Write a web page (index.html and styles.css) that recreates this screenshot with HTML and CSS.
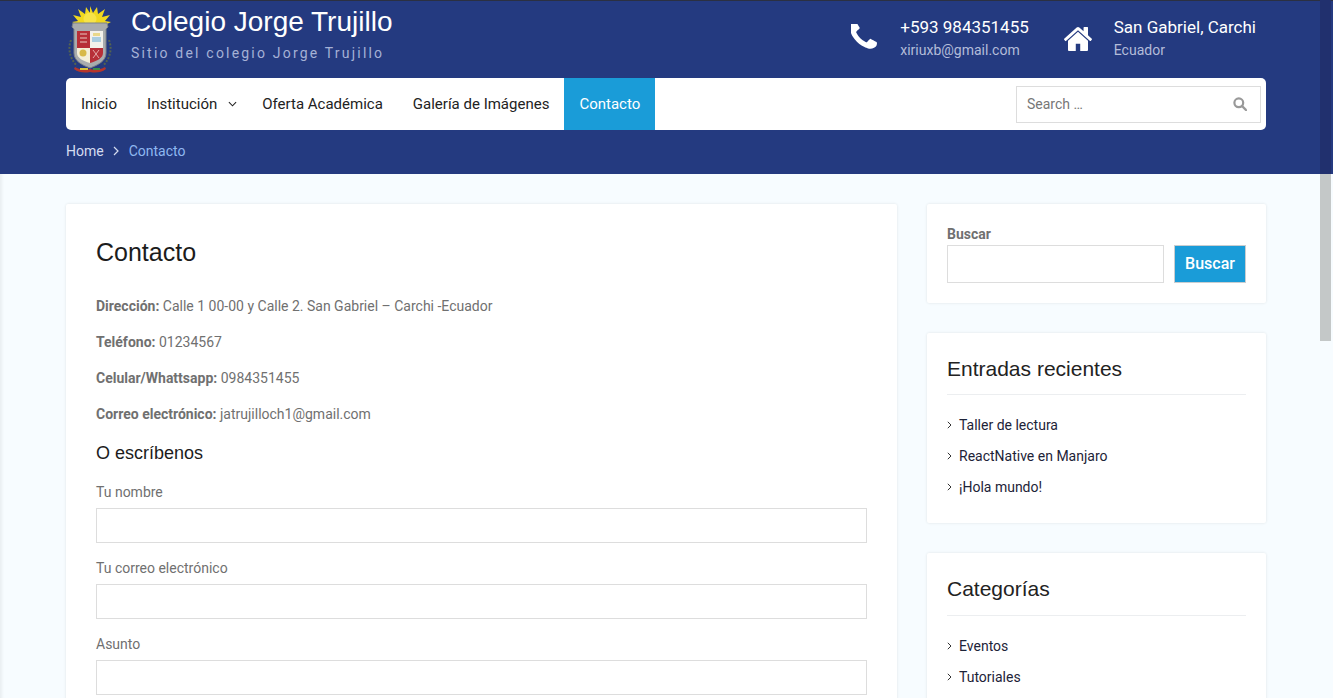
FILE: index.html
```html
<!DOCTYPE html>
<html lang="es">
<head>
<meta charset="utf-8">
<title>Contacto – Colegio Jorge Trujillo</title>
<link rel="stylesheet" href="styles.css">
</head>
<body>
<header class="site-header">
  <div class="top-row">
    <div class="brand">
      <svg class="crest" viewBox="0 0 50 70" width="50" height="70" aria-hidden="true">
        <g fill="#f0d81e">
          <path d="M24 2l3 7 4-6 1 7 7-5-3 8 8-2-5 6 6 1-6 3H12l-6-3 6-1-5-6 8 2-3-8 7 5 1-7 4 6z"/>
        </g>
        <circle cx="24" cy="15" r="6.5" fill="#f7e447"/>
        <g fill="none" stroke="#55644f" stroke-width="2" stroke-dasharray="2 1.5">
          <path d="M5 36c-3 8-2 17 6 26"/>
          <path d="M43 36c3 8 2 17-6 26"/>
        </g>
        <path d="M7 19h34l1 4-2 2v24c0 8-8 12-16 15-8-3-16-7-16-15V25l-2-2z" fill="#a9acae" stroke="#7f8488" stroke-width="1"/>
        <path d="M11 27h13v17H11z" fill="#b72f38"/>
        <path d="M24 27h13v17H24z" fill="#f3f1ea"/>
        <path d="M26 33h9v5h-9z" fill="#a9cde0"/>
        <path d="M27 29h7v3h-7z" fill="#e9d88a"/>
        <path d="M11 44h13v15c-7-2-13-5-13-10z" fill="#f4efd8"/>
        <path d="M24 44h13v5c0 5-6 8-13 10z" fill="#b72f38"/>
        <circle cx="17" cy="49" r="3.5" fill="#d7b948"/>
        <path d="M14 30h7M14 34h7M14 38h7" stroke="#e8c9c0" stroke-width="1"/>
        <path d="M27 46l6 8M33 46l-6 8" stroke="#e5a9a9" stroke-width="1"/>
        <path d="M9 63c5 3 10 3 15 2 5 1 10 1 15-2l1 2c-5 4-11 4-16 3-5 1-11 1-16-3z" fill="#b5352c"/>
        <path d="M14 64h8v2h-8z" fill="#d9c43a"/>
        <path d="M27 64h7v2h-7z" fill="#3f8a45"/>
      </svg>
      <div class="brand-text">
        <div class="site-title">Colegio Jorge Trujillo</div>
        <div class="site-tagline">Sitio del colegio Jorge Trujillo</div>
      </div>
    </div>
    <div class="contact-group">
      <div class="contact-item phone-item">
        <svg class="icon-phone" viewBox="256 256 1344 1344" width="26" height="26" aria-hidden="true"><path fill="#fff" d="M1600 1240q0 27-10 70.5t-21 68.5q-21 50-122 106-94 51-186 51-27 0-53-3.5t-57.5-12.5-47-14.5-55.5-20.5-49-18q-98-35-175-83-127-79-264-216t-216-264q-48-77-83-175-3-9-18-49t-20.5-55.5-14.5-47-12.5-57.5-3.5-53q0-92 51-186 56-101 106-122 25-11 68.5-21t70.5-10q14 0 21 3 18 6 53 76 11 19 30 54t35 63.5 31 53.5q3 4 17.5 25t21.5 35.5 7 28.5q0 20-28.5 50t-62 55-62 53-28.5 46q0 9 5 22.5t8.5 20.5 14 24 11.5 19q76 137 174 235t235 174q2 1 19 11.5t24 14 20.5 8.5 22.5 5q18 0 46-28.5t53-62 55-62 50-28.5q14 0 28.5 7t35.5 21.5 25 17.5q25 15 53.5 31t63.5 35 54 30q70 35 76 53 3 7 3 21z"/></svg>
        <div>
          <div class="contact-main">+593 984351455</div>
          <div class="contact-sub">xiriuxb@gmail.com</div>
        </div>
      </div>
      <div class="contact-item home-item">
        <svg class="icon-home" viewBox="90 253 1612 1283" preserveAspectRatio="none" width="28" height="24" aria-hidden="true"><path fill="#fff" d="M1472 992v480q0 26-19 45t-45 19h-384v-384h-256v384h-384q-26 0-45-19t-19-45v-480q0-1 .5-3t.5-3l575-474 575 474q1 2 1 6zm223-69l-62 74q-8 9-21 11h-3q-13 0-21-7l-692-577-692 577q-12 8-24 7-13-2-21-11l-62-74q-8-10-7-23.5t11-21.5l719-599q32-26 76-26t76 26l244 204v-195q0-14 9-23t23-9h192q14 0 23 9t9 23v408l219 182q10 8 11 21.5t-7 23.5z"/></svg>
        <div>
          <div class="contact-main">San Gabriel, Carchi</div>
          <div class="contact-sub">Ecuador</div>
        </div>
      </div>
    </div>
  </div>
  <nav class="nav-bar">
    <ul class="nav-list">
      <li class="nav-link">Inicio</li>
      <li class="nav-link has-sub">Institución
        <svg class="caret" viewBox="0 0 10 6" width="9" height="6" aria-hidden="true"><path d="M1 1l4 4 4-4" fill="none" stroke="#222" stroke-width="1.2"/></svg>
      </li>
      <li class="nav-link">Oferta Académica</li>
      <li class="nav-link">Galería de Imágenes</li>
      <li class="nav-link is-active">Contacto</li>
    </ul>
    <div class="nav-search">
      <span class="nav-search-text">Search …</span>
      <svg viewBox="0 0 14 14" width="14" height="14" aria-hidden="true"><circle cx="5.8" cy="5.8" r="4.4" fill="none" stroke="#999" stroke-width="2.2"/><path d="M9 9l4 4" stroke="#999" stroke-width="2.4" stroke-linecap="round"/></svg>
    </div>
  </nav>
  <div class="breadcrumbs">
    <span>Home</span>
    <svg viewBox="0 0 6 10" width="6" height="10" aria-hidden="true"><path d="M1 1l4 4-4 4" fill="none" stroke="#d5dcf0" stroke-width="1.2"/></svg>
    <span class="crumb-current">Contacto</span>
  </div>
</header>

<div class="page-body">
  <main class="card main-card">
    <h1 class="page-title">Contacto</h1>
    <p class="info"><strong>Dirección:</strong> Calle 1 00-00 y Calle 2. San Gabriel – Carchi -Ecuador</p>
    <p class="info"><strong>Teléfono:</strong> 01234567</p>
    <p class="info"><strong>Celular/Whattsapp:</strong> 0984351455</p>
    <p class="info"><strong>Correo electrónico:</strong> jatrujilloch1@gmail.com</p>
    <h3 class="form-title">O escríbenos</h3>
    <label class="field"><span class="field-label">Tu nombre</span><input class="field-input" type="text"></label>
    <label class="field"><span class="field-label">Tu correo electrónico</span><input class="field-input" type="text"></label>
    <label class="field"><span class="field-label">Asunto</span><input class="field-input" type="text"></label>
  </main>
  <aside class="sidebar">
    <section class="card search-card">
      <div class="search-label">Buscar</div>
      <div class="search-row">
        <input class="search-input" type="text">
        <button class="search-btn" type="button">Buscar</button>
      </div>
    </section>
    <section class="card widget widget-recent">
      <h2 class="widget-title">Entradas recientes</h2>
      <ul class="widget-list">
        <li class="widget-item"><svg viewBox="0 0 5 8" width="5" height="8" aria-hidden="true"><path d="M.8.8L4 4 .8 7.2" fill="none" stroke="#333" stroke-width="1"/></svg>Taller de lectura</li>
        <li class="widget-item"><svg viewBox="0 0 5 8" width="5" height="8" aria-hidden="true"><path d="M.8.8L4 4 .8 7.2" fill="none" stroke="#333" stroke-width="1"/></svg>ReactNative en Manjaro</li>
        <li class="widget-item"><svg viewBox="0 0 5 8" width="5" height="8" aria-hidden="true"><path d="M.8.8L4 4 .8 7.2" fill="none" stroke="#333" stroke-width="1"/></svg>¡Hola mundo!</li>
      </ul>
    </section>
    <section class="card widget">
      <h2 class="widget-title">Categorías</h2>
      <ul class="widget-list">
        <li class="widget-item"><svg viewBox="0 0 5 8" width="5" height="8" aria-hidden="true"><path d="M.8.8L4 4 .8 7.2" fill="none" stroke="#333" stroke-width="1"/></svg>Eventos</li>
        <li class="widget-item"><svg viewBox="0 0 5 8" width="5" height="8" aria-hidden="true"><path d="M.8.8L4 4 .8 7.2" fill="none" stroke="#333" stroke-width="1"/></svg>Tutoriales</li>
      </ul>
    </section>
  </aside>
</div>
<div class="scroll-thumb"><div class="scroll-thumb-top"></div></div>
</body>
</html>
```

FILE: styles.css
```css
* { box-sizing: border-box; }
html, body {
  margin: 0;
  height: 698px;
  overflow: hidden;
}
body {
  position: relative;
  background: #f7fcff;
  font-family: Roboto, "Liberation Sans", sans-serif;
  font-size: 14px;
  color: #707070;
}

/* header */
.site-header {
  height: 174px;
  background: #243a80;
  border-top: 1px solid #2b3042;
  padding: 0 67px 0 66px;
}
.top-row {
  height: 77px;
  display: flex;
  justify-content: space-between;
}
.brand { display: flex; }
.crest { margin-top: 3px; flex: none; }
.brand-text { margin-left: 15px; }
.site-title {
  font-family: "Liberation Sans", Arial, sans-serif;
  font-size: 28px;
  line-height: 30px;
  margin-top: 6px;
  color: #fff;
}
.site-tagline {
  font-size: 14px;
  line-height: 20px;
  margin-top: 6px;
  letter-spacing: 2.2px;
  color: #a5b1d6;
}
.contact-group {
  display: flex;
  padding-right: 10px;
  padding-top: 16px;
}
.contact-item { display: flex; align-items: flex-start; }
.phone-item { margin-right: 35px; }
.icon-phone { margin: 7px 23px 0 0; }
.icon-home { margin: 10px 22px 0 0; }
.contact-main {
  font-size: 17px;
  line-height: 20px;
  color: #fff;
}
.contact-sub {
  font-size: 14px;
  line-height: 20px;
  margin-top: 3px;
  color: #b3bcd9;
}

/* nav */
.nav-bar {
  height: 52px;
  background: #fff;
  border-radius: 5px;
  display: flex;
  justify-content: space-between;
  align-items: center;
  padding-right: 5px;
}
.nav-list {
  display: flex;
  height: 100%;
  list-style: none;
  margin: 0;
  padding: 0;
}
.nav-link {
  display: flex;
  align-items: center;
  padding: 0 15px;
  font-size: 15px;
  color: #222;
}
.has-sub { position: relative; padding-right: 30px; }
.caret { position: absolute; right: 10px; top: 23px; }
.is-active { background: #1a9cd8; color: #fff; }
.nav-search {
  width: 245px;
  height: 37px;
  border: 1px solid #ddd;
  display: flex;
  align-items: center;
  justify-content: space-between;
  padding: 0 13px 0 10px;
}
.nav-search-text { color: #777; font-size: 14px; }

.breadcrumbs {
  display: flex;
  align-items: center;
  gap: 9px;
  height: 42px;
  color: #d5dcf0;
  font-size: 14px;
}
.crumb-current { color: #8fb8f0; margin-left: 1px; }

/* body */
.page-body {
  height: 524px;
  display: flex;
  align-items: flex-start;
  gap: 30px;
  padding: 30px 67px 0 66px;
  box-shadow: inset 4px 0 3px -2px rgba(0, 0, 0, .06);
}
.card {
  background: #fff;
  border-radius: 2px;
  box-shadow: 0 0 3px rgba(0, 0, 0, .1);
}
.main-card {
  width: 831px;
  flex: none;
  padding: 30px 30px 40px;
}
.page-title {
  font-family: "Liberation Sans", Arial, sans-serif;
  font-size: 25px;
  line-height: 36px;
  font-weight: 400;
  color: #1c1c1c;
  margin: 0 0 26px;
}
.info {
  margin: 0 0 16px;
  line-height: 20px;
}
.form-title {
  font-family: "Liberation Sans", Arial, sans-serif;
  font-size: 18px;
  line-height: 24px;
  font-weight: 400;
  color: #1c1c1c;
  margin: 17px 0 0;
}
.field { display: block; margin-top: 15px; }
.form-title + .field { margin-top: 17px; }
.field-label { display: block; line-height: 20px; margin-bottom: 6px; }
.field-input {
  display: block;
  width: 771px;
  height: 35px;
  border: 1px solid #ddd;
  background: #fff;
  padding: 0;
}

/* sidebar */
.sidebar {
  width: 339px;
  flex: none;
  display: flex;
  flex-direction: column;
  gap: 30px;
}
.search-card { height: 99px; padding: 20px 20px 0; }
.search-label { font-weight: 700; line-height: 20px; margin-bottom: 1px; }
.search-row { display: flex; gap: 10px; }
.search-input {
  width: 217px;
  height: 38px;
  border: 1px solid #ddd;
  padding: 0;
}
.search-btn {
  width: 72px;
  height: 38px;
  background: #1a9cd8;
  border: 1px solid #c9cdd0;
  color: #fff;
  font-family: Roboto, sans-serif;
  font-size: 16px;
  font-weight: 500;
  padding: 0 0 2px;
}
.widget { padding: 21px 20px 20px; }
.widget-recent { padding-bottom: 21px; }
.widget-title {
  font-family: "Liberation Sans", Arial, sans-serif;
  font-size: 21px;
  line-height: 30px;
  font-weight: 400;
  color: #222;
  margin: 0;
  padding-bottom: 10.4px;
  border-bottom: 1px solid #eceef0;
}
.widget-list { list-style: none; margin: 15px 0 0; padding: 0; }
.widget-recent .widget-list { margin-top: 14px; }
.widget-item {
  display: flex;
  align-items: center;
  gap: 7px;
  height: 31px;
  color: #1d2338;
  font-size: 14px;
}

/* scrollbar overlay */
.scroll-thumb {
  position: absolute;
  top: 0;
  right: 2px;
  width: 11px;
  height: 341px;
  background: #c4c8c8;
}
.scroll-thumb-top { height: 174px; background: #21306e; }
```
